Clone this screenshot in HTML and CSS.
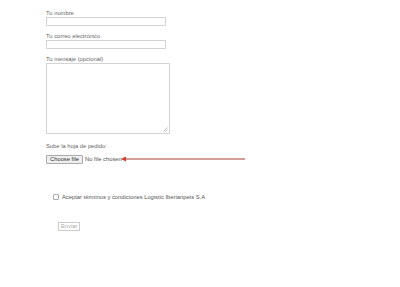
FILE: index.html
```html
<!DOCTYPE html>
<html lang="es">
<head>
<meta charset="utf-8">
<link rel="stylesheet" href="styles.css">
</head>
<body>
<form class="form">
  <label class="field">
    <span class="label">Tu nombre</span>
    <span class="input"></span>
  </label>
  <label class="field">
    <span class="label">Tu correo electrónico</span>
    <span class="input"></span>
  </label>
  <label class="field">
    <span class="label">Tu mensaje (opcional)</span>
    <span class="textarea"><svg class="grip" width="5" height="5" viewBox="0 0 5 5"><path d="M4.5 0.5 L0.5 4.5 M4.5 2.5 L2.5 4.5" stroke="#aaa" stroke-width="0.8"/></svg></span>
  </label>
  <div class="upload">
    <span class="label">Sube la hoja de pedido:</span>
    <div class="file-row">
      <span class="file-btn">Choose file</span>
      <span class="file-text">No file chosen</span>
      <svg class="arrow" width="124" height="6" viewBox="0 0 124 6"><path d="M4 3 H124" stroke="#a83a30" stroke-width="1"/><path d="M0 3 L5 0.5 L5 5.5 Z" fill="#d0392b"/></svg>
    </div>
  </div>
  <div class="accept">
    <span class="check"></span>
    <span class="accept-text">Aceptar términos y condiciones Logistic Iberianpets S.A</span>
  </div>
  <div class="submit-row">
    <span class="submit">Enviar</span>
  </div>
</form>
</body>
</html>
```
FILE: styles.css
```css
html, body {
  margin: 0;
  padding: 0;
  background: #fff;
}
body {
  font-family: "Liberation Sans", Arial, sans-serif;
  font-size: 5.8px;
  color: #666;
}
.form {
  padding: 10px 0 0 46px;
  display: flex;
  flex-direction: column;
}
.field {
  display: flex;
  flex-direction: column;
  gap: 1px;
  margin-bottom: 7px;
}
.label {
  line-height: 6px;
  height: 6px;
}
.input {
  display: block;
  width: 118px;
  height: 7px;
  border: 1px solid #d4d4d4;
}
.textarea {
  display: block;
  position: relative;
  width: 122px;
  height: 69px;
  border: 1px solid #d4d4d4;
}
.grip {
  position: absolute;
  right: 1px;
  bottom: 1px;
}
.upload {
  margin-top: 2px;
  display: flex;
  flex-direction: column;
  gap: 5px;
}
.file-row {
  display: flex;
  align-items: center;
  height: 10px;
}
.file-btn {
  box-sizing: border-box;
  height: 9px;
  padding: 0 3px;
  border: 1px solid #aaa;
  border-radius: 1px;
  background: #efefef;
  color: #333;
  line-height: 7px;
}
.file-text {
  margin-left: 2px;
  color: #555;
}
.arrow {
  margin-left: -1px;
}
.accept {
  margin-top: 30px;
  margin-left: 7px;
  display: flex;
  align-items: center;
  gap: 3px;
}
.check {
  width: 4px;
  height: 4px;
  border: 1px solid #aaa;
  border-radius: 1px;
}
.accept-text {
  color: #555;
}
.submit-row {
  margin-top: 22px;
  margin-left: 12px;
}
.submit {
  display: inline-block;
  box-sizing: border-box;
  height: 9px;
  padding: 0 2px;
  border: 1px solid #ccc;
  color: #aaa;
  line-height: 7px;
}
```
